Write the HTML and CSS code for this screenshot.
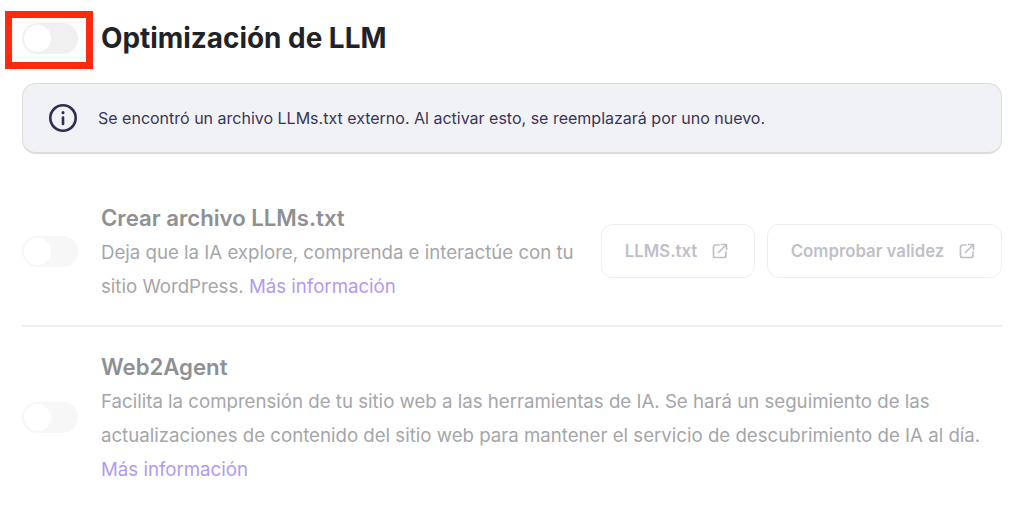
FILE: index.html
```html
<!DOCTYPE html>
<html lang="es">
  <head>
    <meta charset="UTF-8" />
    <meta name="viewport" content="width=device-width, initial-scale=1.0" />
    <title>Optimización de LLM</title>
    <link rel="stylesheet" href="styles.css">
  </head>
  <body>
    <div class="page">
      <div class="header">
        <span class="toggle"><span class="knob"></span></span>
        <h1 class="title">Optimización de LLM</h1>
        <span class="highlight"></span>
      </div>

      <div class="notice">
        <svg class="notice-icon" viewBox="0 0 30 30" fill="none" stroke="#2f2d52" stroke-width="2.6" stroke-linecap="round">
          <circle cx="15" cy="15" r="12.7" />
          <path d="M15 14.5v6.5" />
          <path d="M15 9.600v.2" stroke-width="3" />
        </svg>
        <p class="notice-text">Se encontró un archivo LLMs.txt externo. Al activar esto, se reemplazará por uno nuevo.</p>
      </div>

      <div class="option option-first">
        <span class="toggle toggle-off"><span class="knob"></span></span>
        <div class="option-body">
          <h2 class="option-title">Crear archivo LLMs.txt</h2>
          <p class="option-text">Deja que la IA explore, comprenda e interactúe con tu sitio WordPress. <a class="more" href="#">Más información</a></p>
        </div>
        <div class="actions">
          <a class="btn btn-small" href="#">LLMS.txt
            <svg class="btn-icon" viewBox="0 0 16 16" fill="none" stroke="#bfbfc9" stroke-width="1.7" stroke-linecap="round" stroke-linejoin="round">
              <path d="M7 2H3.500A2 2 0 0 0 1.500 4v8.500a2 2 0 0 0 2 2H12a2 2 0 0 0 2-2V9" />
              <path d="M6.500 9.500 14 2" />
              <path d="M9.500 1.500h5v5" />
            </svg>
          </a>
          <a class="btn btn-large" href="#">Comprobar validez
            <svg class="btn-icon" viewBox="0 0 16 16" fill="none" stroke="#bfbfc9" stroke-width="1.7" stroke-linecap="round" stroke-linejoin="round">
              <path d="M7 2H3.500A2 2 0 0 0 1.500 4v8.500a2 2 0 0 0 2 2H12a2 2 0 0 0 2-2V9" />
              <path d="M6.500 9.500 14 2" />
              <path d="M9.500 1.500h5v5" />
            </svg>
          </a>
        </div>
      </div>

      <div class="option option-last">
        <span class="toggle toggle-off"><span class="knob"></span></span>
        <div class="option-body">
          <h2 class="option-title">Web2Agent</h2>
          <p class="option-text">Facilita la comprensión de tu sitio web a las herramientas de IA. Se hará un seguimiento de las actualizaciones de contenido del sitio web para mantener el servicio de descubrimiento de IA al día. <a class="more" href="#">Más información</a></p>
        </div>
      </div>
    </div>
  </body>
</html>
```

FILE: styles.css
```css
body {
  margin: 0;
  background-color: white;
  font-family: Inter, "Liberation Sans", sans-serif;
  overflow: hidden;
}
.page {
  width: 980px;
  margin-left: 22px;
}
.header {
  position: relative;
  display: flex;
  align-items: center;
  gap: 23px;
  height: 76px;
}
.title {
  margin: 0;
  font-size: 27.9px;
  font-weight: 700;
  color: #1f2328;
}
.highlight {
  position: absolute;
  left: -17px;
  top: 11px;
  width: 88px;
  height: 58px;
  box-sizing: border-box;
  border: 7px solid #ff2a0d;
}
.toggle {
  flex: none;
  display: block;
  width: 56px;
  height: 31px;
  padding: 2px;
  box-sizing: border-box;
  border-radius: 16px;
  background-color: #f0f0f1;
}
.knob {
  display: block;
  width: 27px;
  height: 27px;
  border-radius: 50%;
  background-color: white;
}
.toggle-off {
  margin-bottom: 1px;
  background-color: #f7f7f8;
}
.notice {
  display: flex;
  align-items: center;
  gap: 20px;
  height: 71px;
  margin-top: 7px;
  padding-left: 25px;
  box-sizing: border-box;
  background-color: #f1f2f6;
  border: 1.5px solid #dcdcde;
  border-bottom-width: 2px;
  border-radius: 14px;
}
.notice-icon {
  flex: none;
  width: 30px;
  height: 30px;
}
.notice-text {
  margin: 0;
  font-size: 16px;
  color: #38365a;
}
.option {
  display: flex;
  align-items: center;
  gap: 23px;
}
.option-first {
  padding: 47px 0 22px;
  border-bottom: 2px solid #f0f0f1;
}
.option-last {
  padding-top: 23px;
}
.option-body {
  flex: 1;
}
.option-title {
  margin: 0 0 1px;
  font-size: 22.2px;
  line-height: 33px;
  font-weight: 600;
  color: #8e9093;
}
.option-text {
  margin: 0;
  font-size: 18.65px;
  line-height: 34px;
  color: #a5a6a9;
}
.more {
  color: #b199f5;
  text-decoration: none;
}
.actions {
  display: flex;
  gap: 12px;
  margin-bottom: 3px;
}
.btn {
  display: flex;
  align-items: center;
  justify-content: center;
  gap: 15px;
  height: 54px;
  padding-right: 3px;
  box-sizing: border-box;
  border: 1.5px solid #eeeef0;
  border-radius: 12px;
  font-size: 16.8px;
  font-weight: 600;
  color: #bfbfc9;
  text-decoration: none;
}
.btn-small {
  width: 154px;
}
.btn-large {
  width: 235px;
}
.btn-icon {
  width: 16px;
  height: 16px;
}
```
